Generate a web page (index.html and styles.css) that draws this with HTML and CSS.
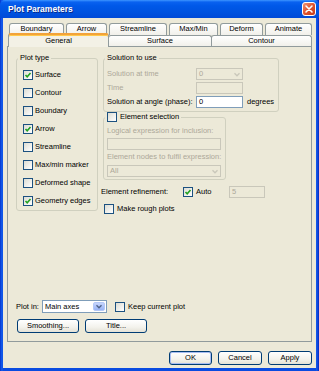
FILE: index.html
```html
<!DOCTYPE html>
<html>
<head>
<meta charset="utf-8">
<title>Plot Parameters</title>
<link rel="stylesheet" href="styles.css">
</head>
<body>
<div class="window">
  <div class="titlebar">
    <span class="title">Plot Parameters</span>
    <span class="close">
      <svg width="14" height="14" viewBox="0 0 14 14">
        <defs>
          <linearGradient id="cg" x1="0" y1="0" x2="1" y2="1">
            <stop offset="0" stop-color="#f09a7c"/>
            <stop offset="0.5" stop-color="#e0532e"/>
            <stop offset="1" stop-color="#c03a18"/>
          </linearGradient>
        </defs>
        <rect x="0.5" y="0.5" width="13" height="13" rx="2.5" fill="url(#cg)" stroke="#ffffff"/>
        <path d="M4 4 L10 10 M10 4 L4 10" stroke="#ffffff" stroke-width="1.6" stroke-linecap="round"/>
      </svg>
    </span>
  </div>
  <div class="client">
    <div class="tabs">
      <div class="tabs-back">
        <div class="tab">Boundary</div>
        <div class="tab">Arrow</div>
        <div class="tab">Streamline</div>
        <div class="tab">Max/Min</div>
        <div class="tab">Deform</div>
        <div class="tab">Animate</div>
      </div>
      <div class="tabs-front">
        <div class="tab selected">General</div>
        <div class="tab">Surface</div>
        <div class="tab">Contour</div>
      </div>
    </div>
    <div class="panel">
      <div class="top">
        <fieldset class="group plot-type">
          <legend>Plot type</legend>
          <div class="checklist">
            <div class="row"><span class="cb"><svg class="tick" viewBox="0 0 8 8"><polyline points="1.5,4 3.2,5.8 6.5,2"/></svg></span><span>Surface</span></div>
            <div class="row"><span class="cb"></span><span>Contour</span></div>
            <div class="row"><span class="cb"></span><span>Boundary</span></div>
            <div class="row"><span class="cb"><svg class="tick" viewBox="0 0 8 8"><polyline points="1.5,4 3.2,5.8 6.5,2"/></svg></span><span>Arrow</span></div>
            <div class="row"><span class="cb"></span><span>Streamline</span></div>
            <div class="row"><span class="cb"></span><span>Max/min marker</span></div>
            <div class="row"><span class="cb"></span><span>Deformed shape</span></div>
            <div class="row"><span class="cb"><svg class="tick" viewBox="0 0 8 8"><polyline points="1.5,4 3.2,5.8 6.5,2"/></svg></span><span>Geometry edges</span></div>
          </div>
        </fieldset>
        <div class="right">
          <fieldset class="group solution">
            <legend>Solution to use</legend>
            <div class="sol-grid">
              <span class="disabled">Solution at time</span>
              <span class="combo off"><span class="val">0</span><span class="arrow"><svg viewBox="0 0 9 6"><polyline points="1.5,1.5 4.5,4.5 7.5,1.5"/></svg></span></span>
              <span></span>
              <span class="disabled">Time</span>
              <span class="input off"></span>
              <span></span>
              <span>Solution at angle (phase):</span>
              <span class="input">0</span>
              <span class="unit">degrees</span>
            </div>
          </fieldset>
          <fieldset class="group elements">
            <legend><span class="cb"></span><span>Element selection</span></legend>
            <div class="el-body">
              <div class="disabled">Logical expression for inclusion:</div>
              <div class="input off wide"></div>
              <div class="disabled gap2">Element nodes to fulfil expression:</div>
              <div class="combo off wide"><span class="val">All</span><span class="arrow"><svg viewBox="0 0 9 6"><polyline points="1.5,1.5 4.5,4.5 7.5,1.5"/></svg></span></div>
            </div>
          </fieldset>
          <div class="refine-row">
            <span class="refine-label">Element refinement:</span>
            <span class="cb"><svg class="tick" viewBox="0 0 8 8"><polyline points="1.5,4 3.2,5.8 6.5,2"/></svg></span>
            <span class="auto">Auto</span>
            <span class="input off small">5</span>
          </div>
          <div class="rough-row">
            <span class="cb"></span><span>Make rough plots</span>
          </div>
        </div>
      </div>
      <div class="bottom">
        <div class="plotin-row">
          <span class="plotin-label">Plot in:</span>
          <span class="combo main"><span class="val">Main axes</span><span class="arrow"><svg viewBox="0 0 9 6"><polyline points="1.5,1.5 4.5,4.5 7.5,1.5"/></svg></span></span>
          <span class="cb keep"></span><span>Keep current plot</span>
        </div>
        <div class="btn-row">
          <span class="btn w62">Smoothing...</span>
          <span class="btn w62">Title...</span>
        </div>
      </div>
    </div>
    <div class="dialog-buttons">
      <span class="btn default w43">OK</span>
      <span class="btn w44">Cancel</span>
      <span class="btn w44">Apply</span>
    </div>
  </div>
</div>
</body>
</html>
```

FILE: styles.css
```css
* { box-sizing: border-box; }
html, body { margin: 0; padding: 0; }
body {
  width: 319px;
  height: 371px;
  overflow: hidden;
  font-family: "Liberation Sans", Arial, sans-serif;
  font-size: 7.5px;
  line-height: 10px;
  color: #000;
  background: #ece9d8;
}
.window {
  width: 319px;
  height: 371px;
  background: linear-gradient(90deg, #0831c8 0, #0a4be0 1px, #1660f0 2px, #0a4be0 3px, #0a4be0 316px, #1660f0 317px, #0831c8 318px);
  display: flex;
  flex-direction: column;
}
.titlebar {
  height: 18px;
  flex: none;
  display: flex;
  align-items: center;
  justify-content: space-between;
  padding: 0 3px 0 8px;
  background: linear-gradient(#3d95ff 0, #0a62f0 2px, #0058e8 6px, #0053e0 12px, #004ad8 18px);
  border-radius: 5px 5px 0 0;
}
.title {
  color: #fff;
  font-weight: bold;
  font-size: 8.5px;
  text-shadow: 1px 1px 0 #0a2a8a;
}
.close { width: 14px; height: 14px; display: block; }
.close svg { display: block; }

.client {
  flex: 1;
  margin: 0 3px 3px;
  background: #ece9d8;
  padding: 5px 4px 3px 4px;
  display: flex;
  flex-direction: column;
}

.tabs { position: relative; z-index: 1; }
.tabs-back {
  display: grid;
  grid-template-columns: 55px 41px 58px 49px 43px 47px;
  column-gap: 2px;
  margin-left: 2px;
  height: 12px;
}
.tabs-front {
  display: grid;
  grid-template-columns: 101px 103px 100px;
  margin-left: 1px;
  height: 11px;
  align-items: start;
}
.tab {
  border: 1px solid #919b9c;
  border-bottom: none;
  border-radius: 3px 3px 0 0;
  background: linear-gradient(#ffffff, #f1f0ea);
  text-align: center;
  line-height: 10px;
  height: 12px;
  white-space: nowrap;
}
.tabs-front .tab { height: 11px; margin-left: -1px; }
.tabs-front .tab.selected {
  height: 14px;
  margin-top: -2px;
  margin-left: 0;
  border-top: 2px solid #f2a33a;
  box-shadow: inset 0 1px 0 #ffc94a;
  background: #f3f1e6;
  line-height: 11px;
}

.panel {
  height: 296px;
  flex: none;
  border: 1px solid #919b9c;
  background: #ece9d8;
  padding: 6px 7px 8px 8px;
  display: flex;
  flex-direction: column;
  justify-content: space-between;
}
.top {
  display: grid;
  grid-template-columns: 82px 1fr;
  column-gap: 5px;
  align-items: start;
}
fieldset.group {
  margin: 0;
  padding: 0;
  border: 1px solid #d0d0bf;
  border-radius: 3px;
  min-width: 0;
}
fieldset.group legend {
  padding: 0 2px;
  margin-left: 1px;
  line-height: 10px;
  height: 10px;
}
.checklist { padding: 3px 0 0 6px; }
.checklist .row {
  height: 18px;
  display: flex;
  align-items: center;
  gap: 2px;
  white-space: nowrap;
}
.cb {
  width: 10px;
  height: 10px;
  flex: none;
  border: 1px solid #1c5180;
  background: linear-gradient(135deg, #dcdcd3, #ffffff);
  display: inline-flex;
  align-items: center;
  justify-content: center;
}
.cb .tick { width: 8px; height: 8px; display: block; }
.cb .tick polyline { fill: none; stroke: #21a121; stroke-width: 1.6; }

.right { display: flex; flex-direction: column; align-items: flex-start; }
.solution { width: 176px; }
.sol-grid {
  padding: 5px 3px 3px 3px;
  display: grid;
  grid-template-columns: 89px 47px auto;
  grid-auto-rows: 12px;
  row-gap: 2px;
  align-items: center;
  white-space: nowrap;
}
.unit { padding-left: 4px; }
.disabled { color: #aca899; white-space: nowrap; }

.input {
  height: 12px;
  border: 1px solid #7f9db9;
  background: #fff;
  padding-left: 2px;
  line-height: 10px;
  display: block;
}
.input.off { border-color: #c9c7ba; background: #ece9d8; color: #aca899; }
.combo {
  height: 12px;
  border: 1px solid #7f9db9;
  background: #fff;
  display: flex;
}
.combo .val { flex: 1; padding-left: 2px; line-height: 10px; }
.combo .arrow { width: 11px; display: flex; align-items: center; justify-content: center; }
.combo .arrow svg { width: 8px; height: 5px; display: block; }
.combo .arrow polyline { fill: none; stroke: #4d6185; stroke-width: 1.6; }
.combo.off { border-color: #c9c7ba; background: #ece9d8; color: #aca899; }
.combo.off .arrow polyline { stroke: #c9c7ba; }
.combo.main { width: 65px; height: 13px; }
.combo.main .val { line-height: 11px; }
.combo.main .arrow {
  width: 12px;
  margin: 1px;
  border-radius: 2px;
  background: linear-gradient(#c6d5fc, #98b3f6);
  border: 1px solid #b4c8f6;
}

.elements { width: 123px; margin-top: 6px; }
.elements legend {
  display: flex;
  align-items: center;
  gap: 3px;
  margin-left: 2px;
  padding: 0 2px 0 1px;
}
.el-body { padding: 4px 3px 2px 3px; }
.el-body .wide { width: 114px; margin-top: 2px; }
.el-body .combo.wide { margin-top: 3px; }
.gap2 { margin-top: 2px; }

.refine-row {
  display: flex;
  align-items: center;
  height: 12px;
  margin-top: 6px;
  margin-left: -2px;
  white-space: nowrap;
}
.refine-label { width: 82px; }
.auto { width: 36px; padding-left: 3px; }
.input.small { width: 36px; }
.rough-row {
  display: flex;
  align-items: center;
  gap: 3px;
  height: 10px;
  margin-top: 6px;
  margin-left: 1px;
  white-space: nowrap;
}

.bottom { display: flex; flex-direction: column; gap: 6px; }
.plotin-row { display: flex; align-items: center; height: 13px; white-space: nowrap; }
.plotin-label { width: 26px; }
.cb.keep { margin-left: 8px; margin-right: 3px; }
.btn-row { display: flex; gap: 6px; margin-left: 1px; }

.btn {
  height: 14px;
  border: 1px solid #003c74;
  border-radius: 3px;
  background: linear-gradient(#ffffff, #f3f2ec 60%, #e4e1d6);
  display: flex;
  align-items: center;
  justify-content: center;
  white-space: nowrap;
}
.btn.default { box-shadow: inset 0 0 0 1px #a8bdf2; }
.w62 { width: 62px; }
.w43 { width: 43px; }
.w44 { width: 44px; }
.dialog-buttons {
  display: flex;
  justify-content: flex-end;
  gap: 6px;
  margin-top: 9px;
}
```
